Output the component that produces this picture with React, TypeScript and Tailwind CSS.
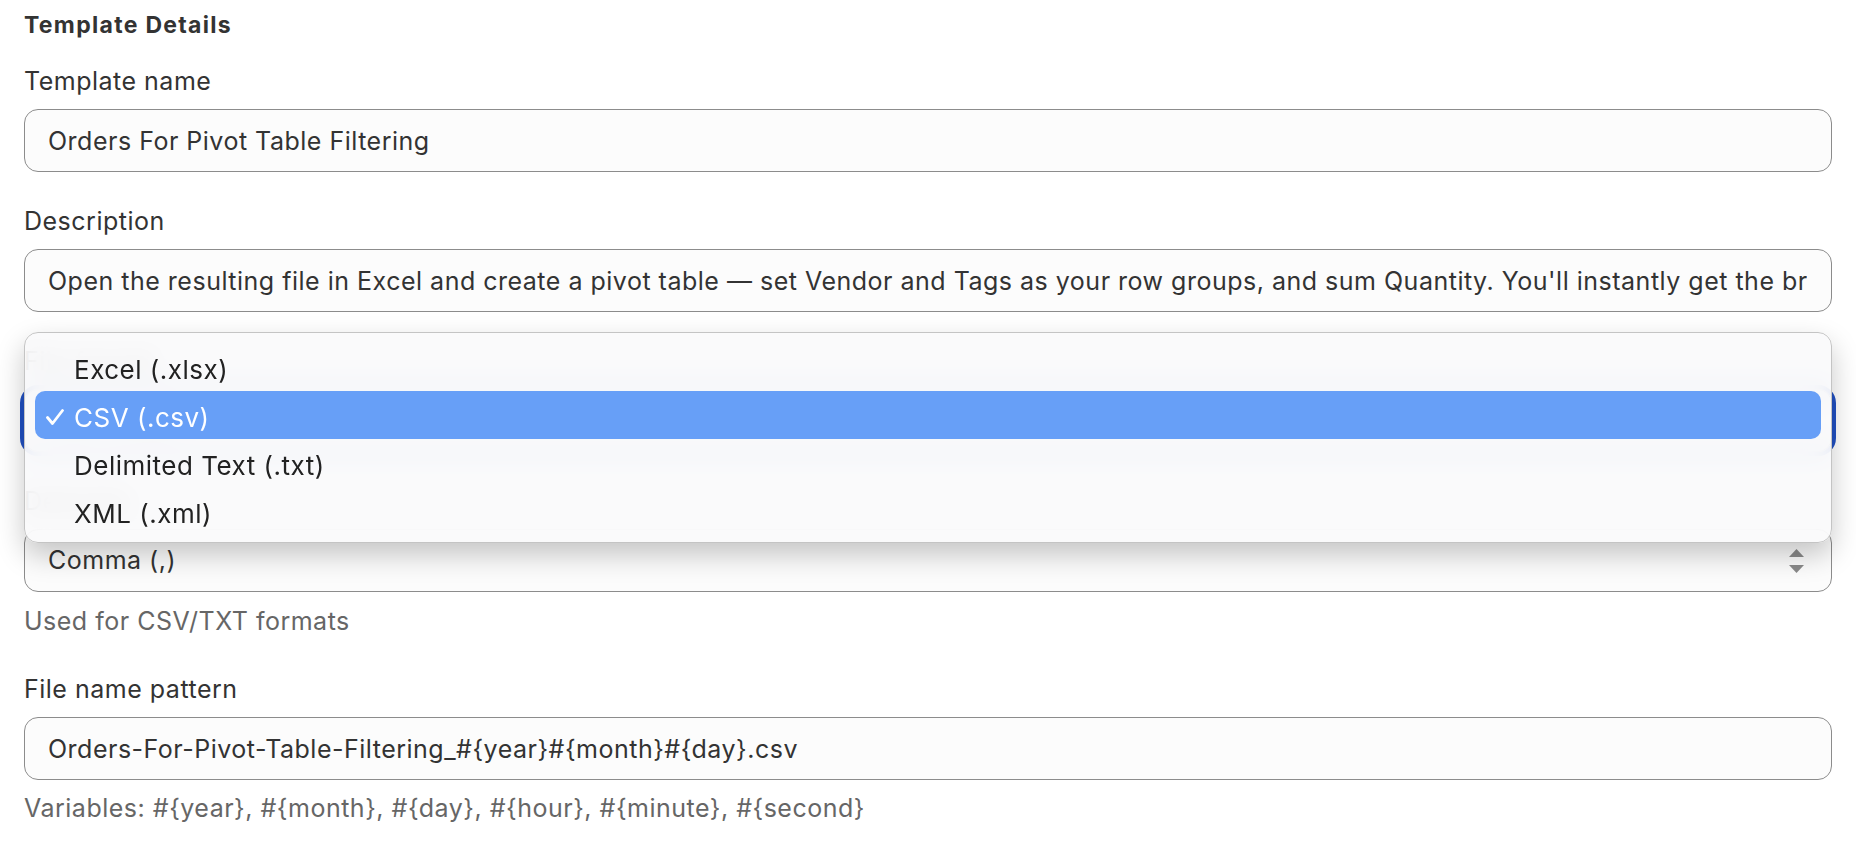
import { useState } from 'react';

const formats = ['Excel (.xlsx)', 'CSV (.csv)', 'Delimited Text (.txt)', 'XML (.xml)'];

function SelectArrows() {
  return (
    <svg width="15" height="24" viewBox="0 0 15 24" className="shrink-0">
      <path d="M7.5 0 L15 8 L0 8 Z" fill="#8a8a8a" />
      <path d="M0 16 L15 16 L7.5 24 Z" fill="#8a8a8a" />
    </svg>
  );
}

function Check() {
  return (
    <svg width="18" height="16" viewBox="0 0 18 16" className="shrink-0">
      <path d="M1.5 8.5 L6.5 14.5 L16.5 1.5" fill="none" stroke="#ffffff" strokeWidth="2.8" strokeLinecap="round" strokeLinejoin="round" />
    </svg>
  );
}

export default function App() {
  const [format, setFormat] = useState('CSV (.csv)');

  const inputCls =
    'block w-full h-[63px] rounded-[14px] border border-[#8c8c8c] bg-[#fcfcfc] pl-[23px] pr-[24px] text-[25px] tracking-[0.5px] text-[#333] outline-none';
  const labelCls = 'block text-[25px] leading-[32px] tracking-[0.5px]';

  return (
    <div className="min-h-screen bg-white px-[24px] pt-[10px] font-['Inter','Liberation_Sans',sans-serif] text-[#333]">
      <h2 className="text-[23px] font-bold leading-[30px] tracking-[1.3px]">Template Details</h2>

      {/* Template name */}
      <div className="mt-[25px]">
        <label className={labelCls}>Template name</label>
        <input readOnly className={`mt-[12px] ${inputCls}`} value="Orders For Pivot Table Filtering" />
      </div>

      {/* Description */}
      <div className="mt-[33px]">
        <label className={labelCls}>Description</label>
        <input
          readOnly
          className={`mt-[12px] ${inputCls}`}
          value="Open the resulting file in Excel and create a pivot table — set Vendor and Tags as your row groups, and sum Quantity. You'll instantly get the breakdown of quantities ordered by vendor and tag."
        />
      </div>

      {/* File format (open menu) */}
      <div className="relative mt-[33px]">
        <label className={labelCls}>File format</label>
        <div className="mt-[12px] flex h-[63px] items-center justify-between rounded-[14px] border border-[#8c8c8c] bg-[#fcfcfc] pl-[23px] pr-[27px] text-[25px] tracking-[0.5px] outline outline-[4px] outline-[#2150c2]">
          <span>{format}</span>
          <SelectArrows />
        </div>

        <div className="absolute left-0 right-0 top-[-13px] z-10 h-[211px] rounded-[14px] border border-[#c4c4c4] bg-[#f9f9fb]/90 pt-[10px] shadow-[0_12px_28px_rgba(0,0,0,0.22)] backdrop-blur-[12px]">
          {formats.map((f) => {
            const active = f === format;
            return (
              <div
                key={f}
                onClick={() => setFormat(f)}
                className={`mx-[10px] flex h-[48px] items-center rounded-[10px] pl-[11px] text-[26px] tracking-[0.5px] ${
                  active ? 'bg-[#679ff7] text-white' : 'text-[#222]'
                }`}
              >
                <span className="flex w-[28px] items-center pt-[4px]">{active && <Check />}</span>
                <span className="pt-[6px] leading-[42px]">{f}</span>
              </div>
            );
          })}
        </div>
      </div>

      {/* Delimiter */}
      <div className="mt-[33px]">
        <label className={labelCls}>Delimiter</label>
        <div className="mt-[12px] flex h-[63px] items-center justify-between rounded-[14px] border border-[#8c8c8c] bg-[#fcfcfc] pl-[23px] pr-[27px] text-[25px] tracking-[0.5px]">
          <span>Comma (,)</span>
          <SelectArrows />
        </div>
        <p className="mt-[13px] text-[25px] leading-[32px] tracking-[0.5px] text-[#666]">Used for CSV/TXT formats</p>
      </div>

      {/* File name pattern */}
      <div className="mt-[36px]">
        <label className={labelCls}>File name pattern</label>
        <input readOnly className={`mt-[12px] ${inputCls}`} value="Orders-For-Pivot-Table-Filtering_#{year}#{month}#{day}.csv" />
        <p className="mt-[12px] text-[25px] leading-[32px] tracking-[0.5px] text-[#666]">
          Variables: #{'{year}'}, #{'{month}'}, #{'{day}'}, #{'{hour}'}, #{'{minute}'}, #{'{second}'}
        </p>
      </div>
    </div>
  );
}
